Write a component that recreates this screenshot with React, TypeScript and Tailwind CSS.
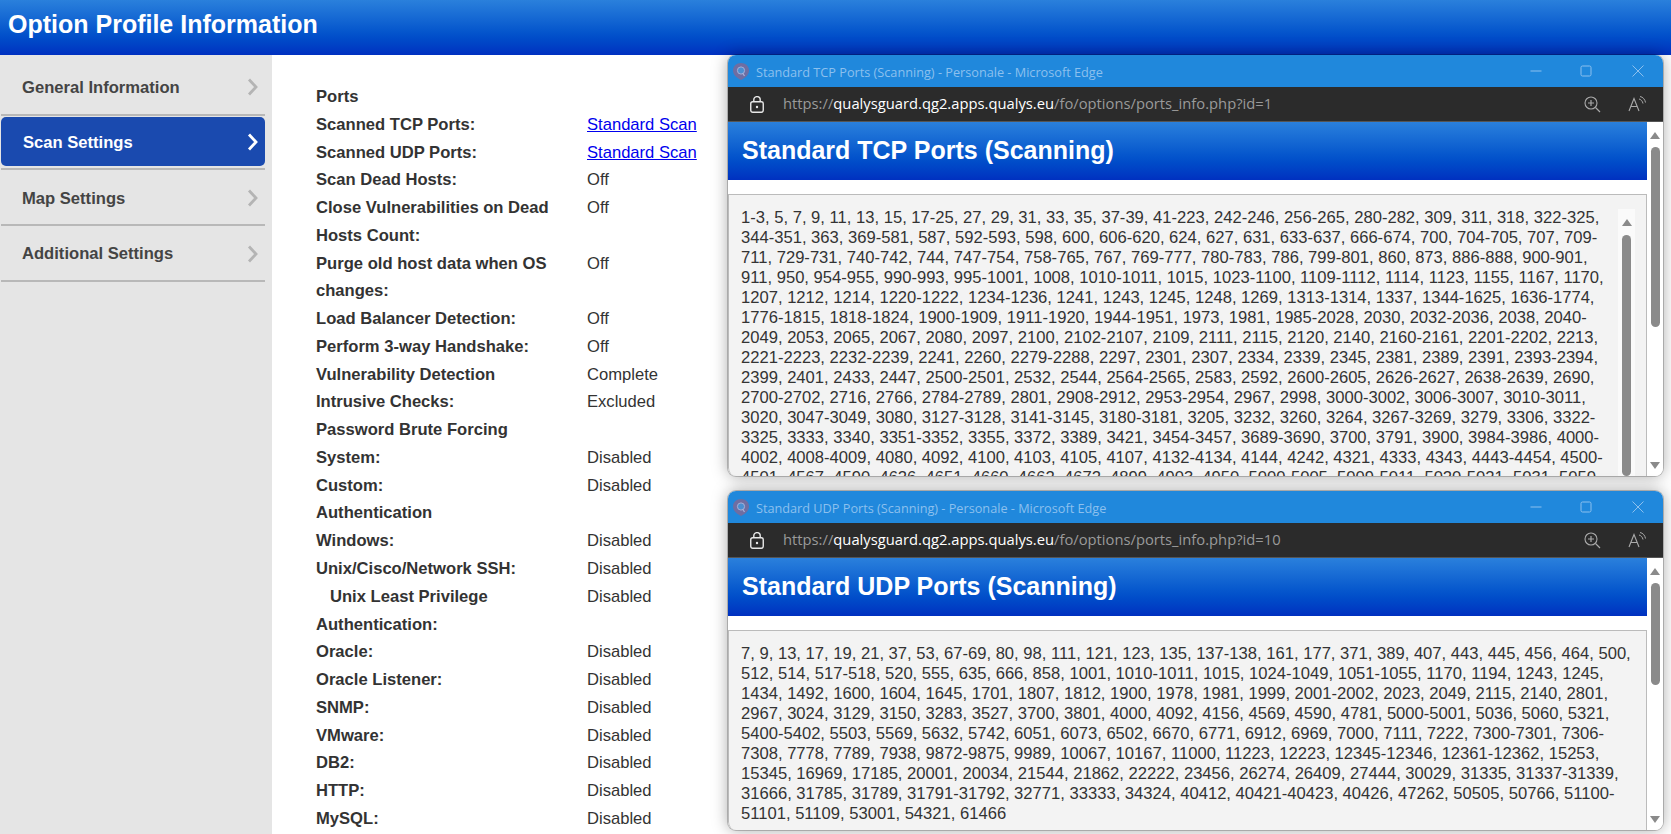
import React from "react";

const rows: { l: string; v?: string; link?: boolean; indent?: boolean }[] = [
  { l: "Ports" },
  { l: "Scanned TCP Ports:", v: "Standard Scan", link: true },
  { l: "Scanned UDP Ports:", v: "Standard Scan", link: true },
  { l: "Scan Dead Hosts:", v: "Off" },
  { l: "Close Vulnerabilities on Dead", v: "Off" },
  { l: "Hosts Count:" },
  { l: "Purge old host data when OS", v: "Off" },
  { l: "changes:" },
  { l: "Load Balancer Detection:", v: "Off" },
  { l: "Perform 3-way Handshake:", v: "Off" },
  { l: "Vulnerability Detection", v: "Complete" },
  { l: "Intrusive Checks:", v: "Excluded" },
  { l: "Password Brute Forcing" },
  { l: "System:", v: "Disabled" },
  { l: "Custom:", v: "Disabled" },
  { l: "Authentication" },
  { l: "Windows:", v: "Disabled" },
  { l: "Unix/Cisco/Network SSH:", v: "Disabled" },
  { l: "Unix Least Privilege", v: "Disabled", indent: true },
  { l: "Authentication:" },
  { l: "Oracle:", v: "Disabled" },
  { l: "Oracle Listener:", v: "Disabled" },
  { l: "SNMP:", v: "Disabled" },
  { l: "VMware:", v: "Disabled" },
  { l: "DB2:", v: "Disabled" },
  { l: "HTTP:", v: "Disabled" },
  { l: "MySQL:", v: "Disabled" },
];

const tcp = [
  "1-3, 5, 7, 9, 11, 13, 15, 17-25, 27, 29, 31, 33, 35, 37-39, 41-223, 242-246, 256-265, 280-282, 309, 311, 318, 322-325,",
  "344-351, 363, 369-581, 587, 592-593, 598, 600, 606-620, 624, 627, 631, 633-637, 666-674, 700, 704-705, 707, 709-",
  "711, 729-731, 740-742, 744, 747-754, 758-765, 767, 769-777, 780-783, 786, 799-801, 860, 873, 886-888, 900-901,",
  "911, 950, 954-955, 990-993, 995-1001, 1008, 1010-1011, 1015, 1023-1100, 1109-1112, 1114, 1123, 1155, 1167, 1170,",
  "1207, 1212, 1214, 1220-1222, 1234-1236, 1241, 1243, 1245, 1248, 1269, 1313-1314, 1337, 1344-1625, 1636-1774,",
  "1776-1815, 1818-1824, 1900-1909, 1911-1920, 1944-1951, 1973, 1981, 1985-2028, 2030, 2032-2036, 2038, 2040-",
  "2049, 2053, 2065, 2067, 2080, 2097, 2100, 2102-2107, 2109, 2111, 2115, 2120, 2140, 2160-2161, 2201-2202, 2213,",
  "2221-2223, 2232-2239, 2241, 2260, 2279-2288, 2297, 2301, 2307, 2334, 2339, 2345, 2381, 2389, 2391, 2393-2394,",
  "2399, 2401, 2433, 2447, 2500-2501, 2532, 2544, 2564-2565, 2583, 2592, 2600-2605, 2626-2627, 2638-2639, 2690,",
  "2700-2702, 2716, 2766, 2784-2789, 2801, 2908-2912, 2953-2954, 2967, 2998, 3000-3002, 3006-3007, 3010-3011,",
  "3020, 3047-3049, 3080, 3127-3128, 3141-3145, 3180-3181, 3205, 3232, 3260, 3264, 3267-3269, 3279, 3306, 3322-",
  "3325, 3333, 3340, 3351-3352, 3355, 3372, 3389, 3421, 3454-3457, 3689-3690, 3700, 3791, 3900, 3984-3986, 4000-",
  "4002, 4008-4009, 4080, 4092, 4100, 4103, 4105, 4107, 4132-4134, 4144, 4242, 4321, 4333, 4343, 4443-4454, 4500-",
  "4501, 4567, 4590, 4626, 4651, 4660, 4662, 4672, 4899, 4903, 4950, 5000-5005, 5009-5011, 5020-5021, 5031, 5050,",
];

const udp = [
  "7, 9, 13, 17, 19, 21, 37, 53, 67-69, 80, 98, 111, 121, 123, 135, 137-138, 161, 177, 371, 389, 407, 443, 445, 456, 464, 500,",
  "512, 514, 517-518, 520, 555, 635, 666, 858, 1001, 1010-1011, 1015, 1024-1049, 1051-1055, 1170, 1194, 1243, 1245,",
  "1434, 1492, 1600, 1604, 1645, 1701, 1807, 1812, 1900, 1978, 1981, 1999, 2001-2002, 2023, 2049, 2115, 2140, 2801,",
  "2967, 3024, 3129, 3150, 3283, 3527, 3700, 3801, 4000, 4092, 4156, 4569, 4590, 4781, 5000-5001, 5036, 5060, 5321,",
  "5400-5402, 5503, 5569, 5632, 5742, 6051, 6073, 6502, 6670, 6771, 6912, 6969, 7000, 7111, 7222, 7300-7301, 7306-",
  "7308, 7778, 7789, 7938, 9872-9875, 9989, 10067, 10167, 11000, 11223, 12223, 12345-12346, 12361-12362, 15253,",
  "15345, 16969, 17185, 20001, 20034, 21544, 21862, 22222, 23456, 26274, 26409, 27444, 30029, 31335, 31337-31339,",
  "31666, 31785, 31789, 31791-31792, 32771, 33333, 34324, 40412, 40421-40423, 40426, 47262, 50505, 50766, 51100-",
  "51101, 51109, 53001, 54321, 61466",
];

const Arrow = ({ down }: { down?: boolean }) => (
  <svg width="10" height="7" viewBox="0 0 10 7" className="block">
    <path d={down ? "M0 0H10L5 7Z" : "M5 0L10 7H0Z"} fill="#8a8a8a" />
  </svg>
);

const Chevron = ({ active }: { active?: boolean }) => (
  <svg width="11" height="18" viewBox="0 0 11 18" className="shrink-0">
    <path d="M2 1.5L9 9L2 16.5" fill="none" stroke={active ? "#ffffff" : "#b4b4b4"} strokeWidth="2.8" />
  </svg>
);

const QLogo = () => (
  <svg width="16" height="17" viewBox="0 0 16 17" className="shrink-0">
    <path d="M8 0C12.5 0 16 3 16 7.5C16 12 12 15 8 17C4 15 0 12 0 7.5C0 3 3.5 0 8 0Z" fill="#6f6ea2" />
    <circle cx="8" cy="7.5" r="3.6" fill="#4a8fd2" stroke="#a6b0d8" strokeWidth="1" />
    <path d="M9.5 10L11.5 13" stroke="#a6b0d8" strokeWidth="1.3" />
  </svg>
);

function Scrollbar({ thumbClass }: { thumbClass: string }) {
  return (
    <div className="flex h-full flex-col items-center">
      <div className="pt-[10px]"><Arrow /></div>
      <div className={`mt-[8px] w-[9px] rounded-full bg-[#8a8a8a] ${thumbClass}`} />
      <div className="mt-auto pb-[7px]"><Arrow down /></div>
    </div>
  );
}

function PopWindow({
  title,
  heading,
  query,
  lines,
  pos,
  outerThumb,
  inner,
  padTop,
}: {
  title: string;
  heading: string;
  query: string;
  lines: string[];
  pos: string;
  outerThumb: string;
  inner?: boolean;
  padTop: string;
}) {
  return (
    <div className={`absolute left-[728px] w-[935px] flex flex-col overflow-hidden rounded-[8px] bg-white shadow-[0_0_16px_rgba(0,0,0,0.35)] ring-1 ring-black/20 ${pos}`}>
      <div className="flex h-[32px] shrink-0 items-center bg-[#2088dc] pl-[5px]">
        <QLogo />
        <span className="ml-[7px] pt-[3px] text-[12.7px] text-[#8cc0ee] [font-family:'Open_Sans',sans-serif]">{title}</span>
        <div className="ml-auto flex items-center pr-[19px]">
          <svg width="12" height="12" viewBox="0 0 12 12"><path d="M0.5 6H11.5" stroke="#8cc0ee" strokeWidth="1" /></svg>
          <svg width="12" height="12" viewBox="0 0 12 12" className="ml-[38px]"><rect x="1" y="1" width="10" height="10" rx="1.5" fill="none" stroke="#8cc0ee" strokeWidth="1" /></svg>
          <svg width="12" height="12" viewBox="0 0 12 12" className="ml-[40px]"><path d="M0.5 0.5L11.5 11.5M11.5 0.5L0.5 11.5" stroke="#8cc0ee" strokeWidth="1" /></svg>
        </div>
      </div>
      <div className="flex h-[35px] shrink-0 items-center border-b border-[#555] bg-[#2b2b2b] pl-[22px]">
        <svg width="14" height="17" viewBox="0 0 14 17" className="shrink-0">
          <rect x="0.75" y="5.75" width="12.5" height="10.5" rx="2" fill="none" stroke="#e8e8e8" strokeWidth="1.4" />
          <path d="M3.8 5.5V3.8a3.2 3.2 0 0 1 6.4 0V5.5" fill="none" stroke="#e8e8e8" strokeWidth="1.4" />
          <circle cx="7" cy="11" r="1.2" fill="#e8e8e8" />
        </svg>
        <span className="ml-[19px] pb-[2px] text-[14.75px] text-[#9a9a9a] [font-family:'Open_Sans',sans-serif]">
          https://<span className="text-white">qualysguard.qg2.apps.qualys.eu</span>/fo/options/ports_info.php?id={query}
        </span>
        <div className="ml-auto flex items-center pr-[17px]">
          <svg width="17" height="17" viewBox="0 0 17 17">
            <circle cx="7" cy="7" r="6" fill="none" stroke="#aaa" strokeWidth="1.1" />
            <path d="M4 7H10M7 4V10M11.5 11.5L16 16" stroke="#aaa" strokeWidth="1.2" />
          </svg>
          <svg width="18" height="16" viewBox="0 0 18 16" className="ml-[27px]">
            <path d="M1 15L6 2.5L11 15M2.8 10.5H9.2" fill="none" stroke="#aaa" strokeWidth="1.1" />
            <path d="M11 3C13 3.5 14.5 5 15 7.5M12 0.5C15 1 17 3.5 17.5 6.5" fill="none" stroke="#aaa" strokeWidth="1" />
          </svg>
        </div>
      </div>
      <div className="flex min-h-0 flex-1">
        <div className="flex min-w-0 flex-1 flex-col">
          <div className="flex h-[58px] shrink-0 items-center bg-gradient-to-b from-[#2a80dc] to-[#0030c0] pl-[14px] text-[25px] font-bold text-white [font-family:'Liberation_Sans',sans-serif]">
            {heading}
          </div>
          <div className="mt-[14px] flex min-h-0 flex-1 overflow-hidden rounded-bl-[8px] border-l border-t border-r border-[#bbbbbb] bg-[#f3f3f3]">
            <div className={`min-w-0 flex-1 overflow-hidden pl-[12px] text-[16.6px] leading-[20px] whitespace-nowrap text-[#333333] [font-family:'Liberation_Sans',sans-serif] ${padTop}`}>
              {lines.map((t) => (
                <div key={t}>{t}</div>
              ))}
            </div>
            {inner && (
              <div className="mr-[11px] mt-[14px] flex w-[17px] shrink-0 flex-col items-center bg-[#fafafa]">
                <div className="pt-[10px]"><Arrow /></div>
                <div className="mt-[9px] h-[300px] w-[9px] rounded-full bg-[#8a8a8a]" />
              </div>
            )}
          </div>
        </div>
        <div className="w-[16px] shrink-0 bg-white">
          <Scrollbar thumbClass={outerThumb} />
        </div>
      </div>
    </div>
  );
}

export default function App() {
  return (
    <div className="relative h-[834px] w-[1671px] overflow-hidden bg-white [font-family:'Liberation_Sans',Arial,sans-serif]">
      <div className="flex h-[55px] items-center bg-gradient-to-b from-[#2a80dc] to-[#0030c0] pl-[8px] pb-[5px] text-[25px] font-bold text-white">
        Option Profile Information
      </div>
      <div className="flex h-[779px]">
        <aside className="w-[272px] shrink-0 bg-[#e5e5e5] pl-px pr-[7px] pt-px text-[16.6px] font-bold text-[#444444]">
          <div className="flex h-[60px] items-center border-b-2 border-[#b8b8b8] pl-[21px] pr-[7px] pt-[3px]">
            <span className="flex-1 pt-[4px]">General Information</span><Chevron />
          </div>
          <div className="pt-px">
            <div className="flex h-[49px] items-center rounded-[5px] bg-[#1a4aaf] pl-[22px] pr-[7px] text-white">
              <span className="flex-1 pt-[4px]">Scan Settings</span><Chevron active />
            </div>
          </div>
          <div className="mt-[2px] flex h-[58px] items-center border-t-2 border-b-2 border-[#b8b8b8] pl-[21px] pr-[7px] pt-px">
            <span className="flex-1 pt-[4px]">Map Settings</span><Chevron />
          </div>
          <div className="flex h-[56px] items-center border-b-2 border-[#b8b8b8] pl-[21px] pr-[7px] pt-px">
            <span className="flex-1 pt-[2px]">Additional Settings</span><Chevron />
          </div>
        </aside>
        <main className="flex-1 pl-[44px] pt-[28px] text-[16.6px] leading-[27.77px] text-[#333333]">
          {rows.map((r, i) => (
            <div key={i} className="flex">
              <div className={`w-[271px] shrink-0 font-bold ${r.indent ? "pl-[14px]" : ""}`}>{r.l}</div>
              {r.v && (r.link ? (
                <a href="#" className="text-[#0000ee] underline">{r.v}</a>
              ) : (
                <span>{r.v}</span>
              ))}
            </div>
          ))}
        </main>
      </div>

      <PopWindow
        title="Standard TCP Ports (Scanning) - Personale - Microsoft Edge"
        heading="Standard TCP Ports (Scanning)"
        query="1"
        lines={tcp}
        pos="top-[55px] h-[421px]"
        outerThumb="h-[180px]"
        inner
        padTop="pt-[13px]"
      />
      <PopWindow
        title="Standard UDP Ports (Scanning) - Personale - Microsoft Edge"
        heading="Standard UDP Ports (Scanning)"
        query="10"
        lines={udp}
        pos="top-[491px] h-[339px]"
        outerThumb="h-[102px]"
        padTop="pt-[13px]"
      />
    </div>
  );
}
